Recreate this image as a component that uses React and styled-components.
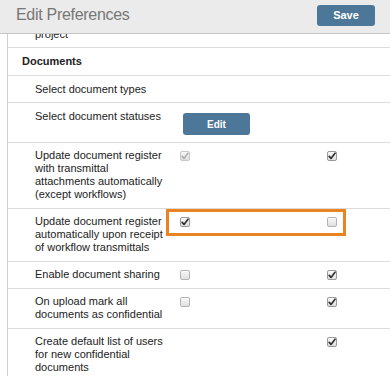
import React from 'react';
import styled, { createGlobalStyle, css } from 'styled-components';

const GlobalStyle = createGlobalStyle`
  html, body {
    margin: 0;
    padding: 0;
    background: #fff;
  }
  body {
    font-family: "Liberation Sans", Arial, sans-serif;
    color: #222;
  }
`;

const Page = styled.div`
  width: 390px;
  height: 376px;
  display: flex;
  flex-direction: column;
  overflow: hidden;
`;

const Header = styled.header`
  position: relative;
  z-index: 1;
  flex: none;
  height: 34px;
  box-sizing: border-box;
  padding: 5px 15px 8px 16px;
  display: flex;
  align-items: center;
  justify-content: space-between;
  background: #ebebeb;
  border-bottom: 1px solid #c6c6c6;
`;

const Title = styled.h1`
  margin: 0;
  font-size: 16px;
  font-weight: normal;
  letter-spacing: -0.3px;
  color: #777;
`;

const Button = styled.button`
  border: 0;
  border-radius: 3px;
  background: #4c7799;
  color: #fff;
  font-family: inherit;
  font-weight: bold;
  font-size: ${(p) => (p.small ? '10px' : '11px')};
  width: ${(p) => (p.small ? '67px' : '58px')};
  height: ${(p) => (p.small ? '22px' : '21px')};
  padding: 0;
  cursor: pointer;
`;

const Body = styled.div`
  flex: 1;
  overflow: hidden;
  margin-left: 7px;
  border-left: 1px solid #cfcfcf;
`;

const List = styled.div`
  margin-top: -26px;
`;

const Row = styled.div`
  position: relative;
  display: grid;
  grid-template-columns: 131px 147px 1fr;
  padding: 6.5px 0 6.5px 27px;
  border-bottom: 1px solid #dcdcdc;
  font-size: 11px;
  line-height: 13px;
`;

const SectionRow = styled.div`
  padding: 7px 0 7px 14px;
  border-bottom: 1px solid #dcdcdc;
  font-size: 11px;
  line-height: 13px;
  font-weight: bold;
`;

const Label = styled.div`
  white-space: ${(p) => (p.nowrap ? 'nowrap' : 'normal')};
`;

const Cell = styled.div`
  padding-left: 14px;
  height: 13px;
  display: flex;
  align-items: center;
`;

const ButtonCell = styled.div`
  padding: 3.5px 0 0 17px;
`;

const Box = styled.span`
  width: 10px;
  height: 10px;
  box-sizing: border-box;
  border-radius: 2px;
  border: 1px solid ${(p) => (p.disabled ? '#c8c8c8' : p.checked ? '#9a9a9a' : '#b4b4b4')};
  background: linear-gradient(#f7f7f7, #e0e0e0);
  display: inline-flex;
  align-items: center;
  justify-content: center;
  ${(p) =>
    !p.disabled &&
    css`
      box-shadow: inset 0 1px 0 #fff;
    `}
`;

const Highlight = styled.div`
  position: absolute;
  left: 158px;
  top: 0;
  width: 180px;
  height: 27px;
  box-sizing: border-box;
  border: 3px solid #ea8420;
  pointer-events: none;
`;

function Checkbox({ checked, disabled }) {
  return (
    <Box disabled={disabled} checked={checked}>
      {checked && (
        <svg width="8" height="8" viewBox="0 0 8 8">
          <path
            d="M1.2 4.4 L3 6.4 L7 1.2"
            fill="none"
            stroke={disabled ? '#b0b0b0' : '#2e2e2e'}
            strokeWidth="1.6"
            strokeLinecap="round"
            strokeLinejoin="round"
          />
        </svg>
      )}
    </Box>
  );
}

const options = [
  {
    label: ['Update document register', 'with transmittal', 'attachments automatically', '(except workflows)'],
    first: { checked: true, disabled: true },
    second: { checked: true },
  },
  {
    label: ['Update document register', 'automatically upon receipt', 'of workflow transmittals'],
    first: { checked: true },
    second: { checked: false },
    highlight: true,
  },
  {
    label: ['Enable document sharing'],
    first: { checked: false },
    second: { checked: true },
  },
  {
    label: ['On upload mark all', 'documents as confidential'],
    first: { checked: false },
    second: { checked: true },
  },
  {
    label: ['Create default list of users', 'for new confidential', 'documents'],
    first: null,
    second: { checked: true },
  },
];

function Lines({ lines }) {
  return lines.map((line, i) => (
    <React.Fragment key={i}>
      {i > 0 && <br />}
      {line}
    </React.Fragment>
  ));
}

export default function App() {
  return (
    <Page>
      <GlobalStyle />
      <Header>
        <Title>Edit Preferences</Title>
        <Button>Save</Button>
      </Header>
      <Body>
        <List>
          <Row>
            <Label nowrap>
              <Lines lines={['Notify members of', 'project']} />
            </Label>
          </Row>
          <SectionRow>Documents</SectionRow>
          <Row>
            <Label nowrap>Select document types</Label>
          </Row>
          <Row>
            <Label nowrap>Select document statuses</Label>
            <ButtonCell>
              <Button small>Edit</Button>
            </ButtonCell>
          </Row>
          {options.map((o, i) => (
            <Row key={i}>
              <Label>
                <Lines lines={o.label} />
              </Label>
              <Cell>{o.first && <Checkbox {...o.first} />}</Cell>
              <Cell>{o.second && <Checkbox {...o.second} />}</Cell>
              {o.highlight && <Highlight />}
            </Row>
          ))}
        </List>
      </Body>
    </Page>
  );
}
